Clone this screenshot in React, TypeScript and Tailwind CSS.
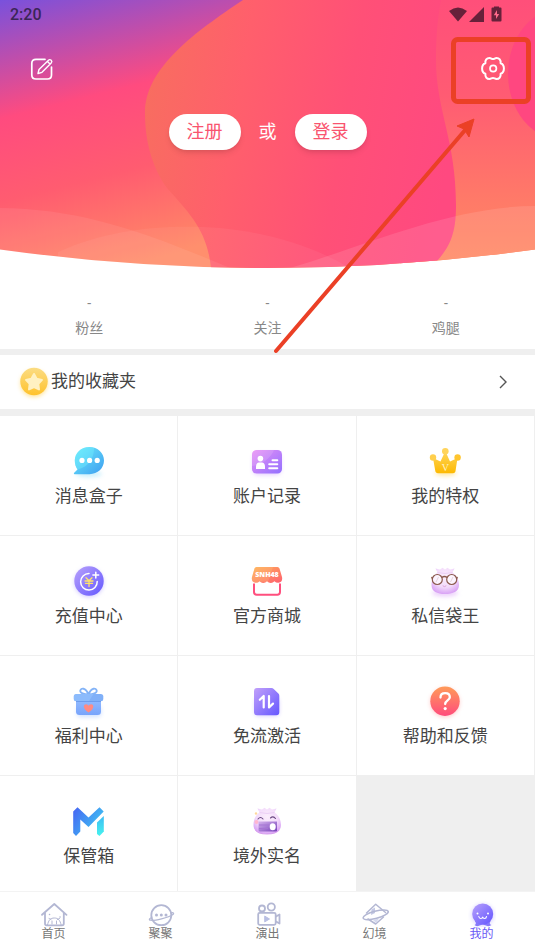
import React from 'react';

type IconProps = { children: React.ReactNode };

const MenuSvg = ({ children }: IconProps) => (
  <svg viewBox="0 0 34 34" className="size-[34px] overflow-visible" fill="none" aria-hidden="true">
    {children}
  </svg>
);

const NavSvg = ({ children }: IconProps) => (
  <svg viewBox="0 0 28 28" className="size-7" fill="none" stroke="#b3b7d3" strokeWidth="1.8" strokeLinejoin="round" strokeLinecap="round" aria-hidden="true">
    {children}
  </svg>
);

const Gradient = ({ id, from, to, vertical }: { id: string; from: string; to: string; vertical?: boolean }) => (
  <linearGradient id={id} x1="0" y1="0" x2={vertical ? '0' : '1'} y2="1">
    <stop offset="0" stopColor={from} />
    <stop offset="1" stopColor={to} />
  </linearGradient>
);

const MessageIcon = () => (
  <MenuSvg>
    <Gradient id="msg" from="#6eeefc" to="#3d9df0" />
    <ellipse cx="17" cy="30" rx="13" ry="3" fill="#c9effc" className="blur-[2px]" />
    <path d="M17.5 3C25.8 3 32 9 32 16.6S25.8 30.2 17.5 30.2H2.6C1.8 30.2 1.6 29.4 2.2 28.8L5.5 25.6C3.8 23.2 2.8 20.2 2.8 16.6 2.8 9 9 3 17.5 3Z" fill="url(#msg)" />
    <path d="M22 4C22 15 16 23 5.5 25.6 3.8 23.2 2.8 20.2 2.8 16.6 2.8 9 9 3 17.5 3Z" fill="#72f1ff" opacity=".4" />
    <circle cx="10" cy="16.4" r="2.6" fill="#fff" />
    <circle cx="17.6" cy="16.4" r="2.6" fill="#fff" />
    <circle cx="25.2" cy="16.4" r="2.6" fill="#fff" />
  </MenuSvg>
);

const AccountIcon = () => (
  <MenuSvg>
    <Gradient id="acc" from="#ea91f5" to="#9270ff" />
    <rect x="3" y="9" width="28" height="22" rx="5" fill="#e6d0ff" className="blur-[2px]" />
    <rect x="2" y="6" width="30" height="23.5" rx="4.5" fill="url(#acc)" />
    <path d="M2 22C12 21 21 14 24 6H6.5A4.5 4.5 0 0 0 2 10.5Z" fill="#fff" opacity=".12" />
    <circle cx="10.4" cy="14.6" r="2.8" fill="#fff" />
    <path d="M6 25V22.5C6 20 7.5 18.6 9 18.6H12C13.5 18.6 15 20 15 22.5V25Z" fill="#fff" />
    <path d="M22.5 16.2H27.300M19.200 20.200H27.300M19.200 24.200H27.300" stroke="#fff" strokeWidth="2" strokeLinecap="round" />
  </MenuSvg>
);

const CrownIcon = () => (
  <MenuSvg>
    <Gradient id="crown" from="#ffd65e" to="#fdb900" vertical />
    <ellipse cx="17.5" cy="29" rx="11" ry="3" fill="#ffe9a8" className="blur-[2px]" />
    <path d="M5 14 12.500 17.500 17.300 7 22 17.500 29.500 14 27.600 26.500Q27.300 29.300 25 29.300H10Q7.600 29.300 7.200 26.500Z" fill="url(#crown)" />
    <circle cx="5" cy="13.5" r="3.200" fill="#ffcf4d" />
    <circle cx="17.300" cy="7.200" r="3.300" fill="#ffd45c" />
    <circle cx="29.600" cy="13.500" r="3.200" fill="#ffc52e" />
    <text x="17.300" y="26.500" textAnchor="middle" fill="#fff3c9" fontSize="10" fontFamily="Liberation Serif, serif">V</text>
  </MenuSvg>
);

const RechargeIcon = () => (
  <MenuSvg>
    <Gradient id="pay" from="#b8a1fb" to="#6458ff" />
    <circle cx="17" cy="18.5" r="14.500" fill="#d3cbff" className="blur-[2px]" />
    <circle cx="17" cy="17" r="14.700" fill="url(#pay)" />
    <path d="M17 9.500A8.300 8.300 0 1 0 25.200 17.500" stroke="#fff" strokeWidth="1.500" strokeLinecap="round" />
    <path d="M23.800 8.200V14M20.900 11.100H26.700" stroke="#fff" strokeWidth="1.500" strokeLinecap="round" />
    <path d="M14 13.800 17 16.800 20 13.800M13 17H21M13.500 19.400H20.500M17 16.800V22.500" stroke="#ffe36a" strokeWidth="1.300" strokeLinecap="round" />
  </MenuSvg>
);

const ShopIcon = () => (
  <MenuSvg>
    <Gradient id="shop" from="#ffb257" to="#ff5f70" />
    <path d="M4 19.500V28Q4 30.700 6.700 30.700H27.300Q30 30.700 30 28V19.500" stroke="#ff4f7e" strokeWidth="2" />
    <path d="M6.500 3H27.500Q29 3 29.500 4.500L32 13Q33 18 28.500 18.800 26 19 24.500 17.200 22.500 19.200 20.700 19 18.500 19 17 17.200 15.500 19 13.300 19 11.500 19.200 9.500 17.200 8 19 5.500 18.800 1 18 2 13L4.500 4.500Q5 3 6.500 3Z" fill="url(#shop)" />
    <path d="M23 3 18 18 9 17.500Q6 20 3.500 18 1 16 2.200 12L4.500 4.500Q5 3 6.500 3Z" fill="#ffd08a" opacity=".22" />
    <text x="17" y="13.300" textAnchor="middle" fill="#fff" fontSize="7" fontWeight="800" fontFamily="Open Sans, sans-serif">SNH48</text>
  </MenuSvg>
);

const DumplingBody = ({ id }: { id: string }) => (
  <>
    <radialGradient id={id} cx=".5" cy=".35" r=".65">
      <stop offset="0" stopColor="#fbeefc" />
      <stop offset=".6" stopColor="#f3dbfb" />
      <stop offset="1" stopColor="#d9a3f5" />
    </radialGradient>
    <path d="M9.500 8.500C5.500 11 3.500 16 3.500 21 3.500 27.500 9 30 17 30S31 27.500 31 21C31 16 28.500 11 24.500 8.500L26.500 4.500 22 5.500 19.500 3.800 17 5.500 14.500 3.800 12 5.500 7.500 4.500Z" fill={`url(#${id})`} />
    <path d="M9.500 8.500Q17 10.500 24.500 8.500" stroke="#ecd0f6" strokeWidth="1" />
  </>
);

const PocketIcon = () => (
  <MenuSvg>
    <ellipse cx="17" cy="29" rx="13" ry="3.500" fill="#ecd0fb" className="blur-[2px]" />
    <DumplingBody id="pocket" />
    <circle cx="9.300" cy="15.500" r="5" fill="#fff" fillOpacity=".65" stroke="#8b5a4d" strokeWidth="1.200" />
    <circle cx="23.700" cy="15.500" r="5" fill="#fff" fillOpacity=".65" stroke="#8b5a4d" strokeWidth="1.200" />
    <path d="M13.800 13.500Q16.500 11.500 19.200 13.500M4.500 14 3.200 13.500M28.500 14 29.800 13.500" stroke="#8b5a4d" strokeWidth="1.400" />
    <path d="M8 18 10.500 13M22.500 18 25 13" stroke="#e5d3da" strokeWidth="1" />
    <path d="M15 22Q16.500 23.500 18 22" stroke="#dca2d9" strokeWidth="1" strokeLinecap="round" />
  </MenuSvg>
);

const GiftIcon = () => (
  <MenuSvg>
    <Gradient id="gift" from="#91baff" to="#78a4fb" vertical />
    <rect x="5" y="22" width="24" height="11" rx="4" fill="#cfe0ff" className="blur-[2px]" />
    <path d="M16.500 10.500C12 10.500 7.800 9 8.300 6.500 8.800 4 13.500 3 16.500 10.500ZM16.500 10.500C21 10.500 25.200 9 24.700 6.500 24.200 4 19.500 3 16.500 10.500Z" stroke="#83b3f7" strokeWidth="1.800" />
    <path d="M4 16H29V27.500Q29 31 25.500 31H7.500Q4 31 4 27.500Z" fill="url(#gift)" />
    <rect x="1.800" y="10" width="29.500" height="7.300" rx="2.500" fill="#80b0f8" />
    <path d="M21.500 10 17 17.300H4.300A2.500 2.500 0 0 1 1.800 14.800V12.500A2.500 2.500 0 0 1 4.300 10Z" fill="#98c5ff" opacity=".5" />
    <path d="M4 17.500H29" stroke="#6796e8" strokeWidth=".8" />
    <path d="M16.600 28.600C10 24.400 11.400 20.300 14 20.300 15.500 20.300 16.200 21.100 16.600 22 17 21.100 17.700 20.300 19.200 20.300 21.800 20.300 23.200 24.400 16.600 28.600Z" fill="#ff8a83" />
  </MenuSvg>
);

const SimIcon = () => (
  <MenuSvg>
    <Gradient id="sim" from="#c1a0fa" to="#6557ff" />
    <rect x="5" y="14" width="24" height="18" rx="4" fill="#d5ccff" className="blur-[2px]" />
    <path d="M7 4H21.500Q22.800 4 23.700 4.900L28.400 9.600Q29.300 10.500 29.300 11.800V28.300Q29.300 31.300 26.300 31.300H7Q4 31.300 4 28.300V7Q4 4 7 4Z" fill="url(#sim)" />
    <path d="M9.800 15.800 13.700 12V23.500M19 12V23.500L23 19.600" stroke="#fff" strokeWidth="2.200" strokeLinecap="round" strokeLinejoin="round" />
  </MenuSvg>
);

const HelpIcon = () => (
  <MenuSvg>
    <Gradient id="help" from="#ff9b59" to="#ff4c7c" vertical />
    <circle cx="17" cy="18.500" r="14.500" fill="#ffc9c8" className="blur-[2px]" />
    <circle cx="17" cy="17.200" r="14.700" fill="url(#help)" />
    <path d="M12.500 13.500C12.500 10.700 14.500 9.200 17.200 9.200 20 9.200 21.800 10.900 21.800 13.200 21.800 16.400 17.200 16.500 17.200 20" stroke="#fff" strokeWidth="2.300" strokeLinecap="round" />
    <circle cx="17.200" cy="24.600" r="1.600" fill="#fff" />
  </MenuSvg>
);

const SafeIcon = () => (
  <MenuSvg>
    <linearGradient id="safe" x1="0" y1="0" x2="1" y2="0.6">
      <stop offset="0" stopColor="#4763f3" />
      <stop offset="1" stopColor="#3dc7f3" />
    </linearGradient>
    <Gradient id="safe2" from="#3ebcf4" to="#46f3ee" vertical />
    <path d="M1.200 7.500 5.500 3.200 16.500 13.500 27.500 3.200 31.700 7.500 16.500 23 8.300 15.500V27.500L4 32 1.200 29Z" fill="url(#safe)" />
    <path d="M31.800 12V27.500L27.500 32 25 30V18.500Z" fill="url(#safe2)" />
  </MenuSvg>
);

const OverseasIcon = () => (
  <MenuSvg>
    <DumplingBody id="overseas" />
    <path d="M8 15Q10.500 12 13 15M20.500 14Q23 11.500 25.500 14.500" stroke="#6b4a83" strokeWidth="1.100" strokeLinecap="round" />
    <circle cx="6.500" cy="18" r="2" fill="#ffb6d0" />
    <Gradient id="camera" from="#d6b4ee" to="#7640b9" />
    <path d="M8.500 17.500H27V27.500H10Q8.500 27.500 8.500 26Z" fill="url(#camera)" />
    <path d="M9 21H19M9 24.500H18" stroke="#a574d3" strokeWidth="1" />
    <ellipse cx="22.700" cy="22.700" rx="3" ry="3.500" fill="#fff" />
    <circle cx="6" cy="9.500" r="1.200" fill="#ffd89b" />
    <path d="M5.500 26Q8 30 17 30T29 26" stroke="#d79fed" strokeWidth="1.200" />
  </MenuSvg>
);

const StarIcon = () => (
  <svg viewBox="0 0 32 32" className="size-8 overflow-visible" fill="none" aria-hidden="true">
    <Gradient id="coin" from="#fbdc83" to="#ffc22c" vertical />
    <circle cx="16" cy="17.500" r="13.500" fill="#ffe49a" className="blur-[2px]" />
    <circle cx="16" cy="15.500" r="13.700" fill="url(#coin)" />
    <path d="M16 8 18.600 12.800 24 13.900 20.300 17.900 21 23.400 16 21 11 23.400 11.700 17.900 8 13.900 13.400 12.800Z" fill="#fff1c2" stroke="#fff1c2" strokeWidth="2" strokeLinejoin="round" />
  </svg>
);

const menu = [
  { label: '消息盒子', Icon: MessageIcon },
  { label: '账户记录', Icon: AccountIcon },
  { label: '我的特权', Icon: CrownIcon },
  { label: '充值中心', Icon: RechargeIcon },
  { label: '官方商城', Icon: ShopIcon },
  { label: '私信袋王', Icon: PocketIcon },
  { label: '福利中心', Icon: GiftIcon },
  { label: '免流激活', Icon: SimIcon },
  { label: '帮助和反馈', Icon: HelpIcon },
  { label: '保管箱', Icon: SafeIcon },
  { label: '境外实名', Icon: OverseasIcon },
];

const HomeIcon = () => (
  <NavSvg>
    <path d="M2 15.800 14.300 5 26.500 15.800M5 13.500V24.500Q5 26.300 6.800 26.300H22Q23.800 26.300 23.800 24.500V13.500" />
    <path d="M7.500 26C8.500 21 10.500 19 14.300 19S20 21 21.200 26M9 19.500 11 20.500M19.500 19.500 17.500 20.500M12 22V25M16.500 22V25" strokeWidth="1" />
    <path d="M9.500 15.500H9.600M20 18H20.100" strokeWidth="1.500" />
  </NavSvg>
);

const PlanetIcon = () => (
  <NavSvg>
    <circle cx="14.300" cy="16.200" r="10" />
    <path d="M4.500 18.500C2.500 19.500 1.500 20.800 3.500 21.200 7 22 22 18.500 25.500 15.800 27.500 14.500 26.500 13.300 24.200 13.800" strokeWidth="1.300" />
    <g fill="#b3b7d3" stroke="none">
      <circle cx="9.500" cy="16" r="1.500" />
      <circle cx="14.300" cy="16" r="1.500" />
      <circle cx="19" cy="16" r="1.500" />
    </g>
  </NavSvg>
);

const MovieIcon = () => (
  <NavSvg>
    <circle cx="8" cy="9.500" r="3" />
    <circle cx="17.300" cy="8" r="3.600" />
    <rect x="4.200" y="13.800" width="17.500" height="12" rx="1.500" />
    <path d="M22 17.500 25.500 15.500V24.500L22 22.500" />
    <path d="M11 17.300 15.500 20 11 22.700Z" fill="#b9bfe3" stroke="#b9bfe3" strokeWidth="1" />
  </NavSvg>
);

const FantasyIcon = () => (
  <NavSvg>
    <path d="M5.500 14 14.700 5.200 24.500 13.500M7 20 14.700 25 22.500 18" strokeWidth="1.500" />
    <path d="M10.500 10.500 14 8.500V14L10 16Z" fill="#c3c8e4" stroke="none" />
    <path d="M12 21 18 19.500 15 24Z" fill="#d5d9ee" stroke="none" />
    <ellipse cx="14.700" cy="15.800" rx="13" ry="3.600" transform="rotate(-15 14.700 15.800)" strokeWidth="1.500" />
  </NavSvg>
);

const MineIcon = () => (
  <NavSvg>
    <Gradient id="mine" from="#b8a1fb" to="#6254ff" />
    <g stroke="none">
      <circle cx="14.700" cy="16" r="11" fill="#d9d2ff" className="blur-[2px]" />
      <path d="M7 22Q9 25 6.500 26 8.500 28 11.500 26.500L14.700 25.500 18 26.500Q21 28 23.500 26 20.500 25 22.500 22Z" fill="#8577fb" />
      <circle cx="14.700" cy="15" r="10.500" fill="url(#mine)" />
      <circle cx="9.500" cy="14.500" r="1" fill="#fff" />
      <circle cx="20" cy="14.500" r="1" fill="#fff" />
    </g>
    <path d="M10.800 17.500Q11.200 19.500 12.800 19.500T14.700 18Q15 19.500 16.600 19.500T18.500 17.500" stroke="#fff" strokeWidth="1.200" />
  </NavSvg>
);

const tabs = [
  { label: '首页', Icon: HomeIcon },
  { label: '聚聚', Icon: PlanetIcon },
  { label: '演出', Icon: MovieIcon },
  { label: '幻境', Icon: FantasyIcon },
  { label: '我的', Icon: MineIcon, active: true },
];

const HeaderBackground = () => (
  <svg viewBox="0 0 535 268" preserveAspectRatio="none" className="absolute inset-0 h-full w-full" aria-hidden="true">
    <defs>
      <linearGradient id="sky" gradientUnits="userSpaceOnUse" x1="0" y1="0" x2="70" y2="280">
        <stop offset="0" stopColor="#7951dc" />
        <stop offset=".4" stopColor="#ff4b7f" />
        <stop offset=".68" stopColor="#ff5c70" />
        <stop offset="1" stopColor="#ff8a66" />
      </linearGradient>
      <linearGradient id="blob" gradientUnits="userSpaceOnUse" x1="145" y1="100" x2="450" y2="150">
        <stop offset="0" stopColor="#f86d60" />
        <stop offset=".3" stopColor="#ff5f6c" />
        <stop offset=".65" stopColor="#ff5077" />
        <stop offset="1" stopColor="#ff4980" />
      </linearGradient>
      <linearGradient id="side" x1="0" y1="0" x2="0" y2="1">
        <stop offset="0" stopColor="#ff4f7a" />
        <stop offset=".35" stopColor="#ff5b73" />
        <stop offset=".75" stopColor="#ff7a68" />
        <stop offset="1" stopColor="#ff8a62" />
      </linearGradient>
      <clipPath id="curve">
        <path d="M0 0H535V249.500Q267 286.500 0 249.500Z" />
      </clipPath>
    </defs>
    <g clipPath="url(#curve)">
      <rect width="535" height="268" fill="url(#sky)" />
      <rect x="400" width="135" height="268" fill="url(#side)" />
      <path d="M243 0C195 32 145 68 145 113 145 145 154 170 167 188 190 214 207 230 211 268H430C450 249 456 235 456 205 456 140 436 110 436 60 436 35 438 15 441 0Z" fill="url(#blob)" />
      <ellipse cx="562" cy="74" rx="54" ry="66" fill="#ff4780" />
      <path d="M0 208C80 209 140 230 230 268H0Z" fill="#fff" opacity=".07" />
      <path d="M58 252C110 228 170 224 220 228 270 233 310 245 350 268H58Z" fill="#fff" opacity=".05" />
      <path d="M290 268C360 248 450 206 535 206V268Z" fill="#fff" opacity=".11" />
    </g>
  </svg>
);

const App = () => {
  return (
    <div className="relative flex h-screen flex-col overflow-hidden bg-white font-['Roboto','Noto_Sans_CJK_SC',sans-serif] text-[#444]">
      <main className="min-h-0 flex-1 overflow-y-auto [scrollbar-width:none]">
        <header className="relative h-[268px]">
          <HeaderBackground />
          <div className="relative flex h-[30px] items-center justify-between pl-[10px] pr-8 text-[#3b2557]">
            <span className="text-base font-medium">2:20</span>
            <svg viewBox="0 0 54 18" className="h-[18px] w-[54px]" fill="#66213a" aria-hidden="true">
              <path d="M0 5Q9 -2 18 5L9 15.500Z" />
              <path d="M35 1V16H20Z" />
              <path d="M45 1.500V0.500H50V1.500H51.500Q52.500 1.500 52.500 2.500V14.500Q52.500 15.500 51.500 15.500H43.500Q42.500 15.500 42.500 14.500V2.500Q42.500 1.500 43.500 1.500Z" />
              <path d="M48 4 44.800 9.200H47V13L50.200 8H48Z" fill="#ff6a8b" />
            </svg>
          </div>
          <div className="relative mt-6 flex items-center justify-between px-[29px] text-white">
            <button type="button" aria-label="编辑">
              <svg viewBox="0 0 26 26" className="size-[26px]" fill="none" stroke="currentColor" strokeWidth="1.700" strokeLinecap="round" strokeLinejoin="round">
                <path d="M16 5.300H7Q2.800 5.300 2.800 9.300V21Q2.800 25 7 25H18.500Q22.500 25 22.500 21V13" />
                <path d="M9 19.500 10 15.500 19.500 6.200Q20.800 5 22.200 6.300 23.500 7.700 22.200 9L13 18.300ZM18.500 7.500 21 10" strokeWidth="1.400" />
              </svg>
            </button>
            <button type="button" aria-label="设置">
              <svg viewBox="0 0 26 26" className="size-[26px] overflow-visible" fill="none" stroke="currentColor" strokeWidth="2" strokeLinejoin="round">
                <path d="M13 5C14.500 5 14.800 4 16.500 4 19.300 4 21 6.200 20.600 9.200 22.800 9.900 23.900 12 23.900 14.500S22.800 19.100 20.600 19.800C21 22.800 19.300 25 16.500 25 14.800 25 14.500 24 13 24S11.200 25 9.500 25C6.700 25 5 22.800 5.400 19.800 3.200 19.100 2.100 17 2.100 14.500S3.200 9.900 5.400 9.200C5 6.200 6.700 4 9.500 4 11.200 4 11.500 5 13 5Z" />
                <circle cx="13.200" cy="14.500" r="3.200" strokeWidth="1.700" />
              </svg>
            </button>
          </div>
          <div className="relative mt-[34px] flex items-center justify-center gap-[18px] text-lg text-white">
            <button type="button" className="h-9 rounded-full bg-white px-[18px] leading-9 text-[#f9546f] shadow-md">注册</button>
            <span>或</span>
            <button type="button" className="h-9 rounded-full bg-white px-[18px] leading-9 text-[#f9546f] shadow-md">登录</button>
          </div>
        </header>

        <section className="grid grid-cols-3 border-b-6 border-[#efefef] pt-[25px] pb-[10px] text-center text-sm text-[#888]">
          {['粉丝', '关注', '鸡腿'].map(name => (
            <div key={name}>
              <div className="leading-5">-</div>
              <div className="mt-1 leading-[22px]">{name}</div>
            </div>
          ))}
        </section>

        <button type="button" className="flex h-[61px] w-full items-center border-b-7 border-[#efefef] pl-[18px] pr-[26px] text-[17px]">
          <StarIcon />
          <span className="ml-px">我的收藏夹</span>
          <svg viewBox="0 0 12 16" className="ml-auto h-4 w-3" fill="none" stroke="#555" strokeWidth="1.400" aria-hidden="true">
            <path d="M3 2 9 8 3 14" />
          </svg>
        </button>

        <div className="grid grid-cols-3 bg-[#efefef]">
          {menu.map(({ label, Icon }) => (
            <button key={label} type="button" className="flex h-[120px] flex-col items-center border-r border-b border-[#efefef] bg-white pt-7">
              <Icon />
              <span className="mt-[6px] text-[17px] leading-6">{label}</span>
            </button>
          ))}
        </div>
      </main>

      <nav className="grid grid-cols-5 border-t border-[#f3f3f3] bg-white pt-[7px] pb-[9px]">
        {tabs.map(({ label, Icon, active }) => (
          <a key={label} href="#" className={`flex flex-col items-center text-xs leading-[15px] ${active ? 'text-[#6a58f5]' : 'text-[#777]'}`}>
            <Icon />
            <span>{label}</span>
          </a>
        ))}
      </nav>

      {/* Repère vers les réglages */}
      <svg viewBox="0 0 535 360" className="pointer-events-none absolute top-0 left-0 w-full" fill="none" stroke="#eb4026" aria-hidden="true">
        <rect x="453.500" y="39.500" width="75" height="62" rx="4" strokeWidth="5" />
        <path d="M276 351 466 129" strokeWidth="4" strokeLinecap="round" />
        <path d="M474 119 457 126 464 129 469 137Z" fill="#eb4026" strokeWidth="1" strokeLinejoin="round" />
      </svg>
    </div>
  );
};

export default App;
